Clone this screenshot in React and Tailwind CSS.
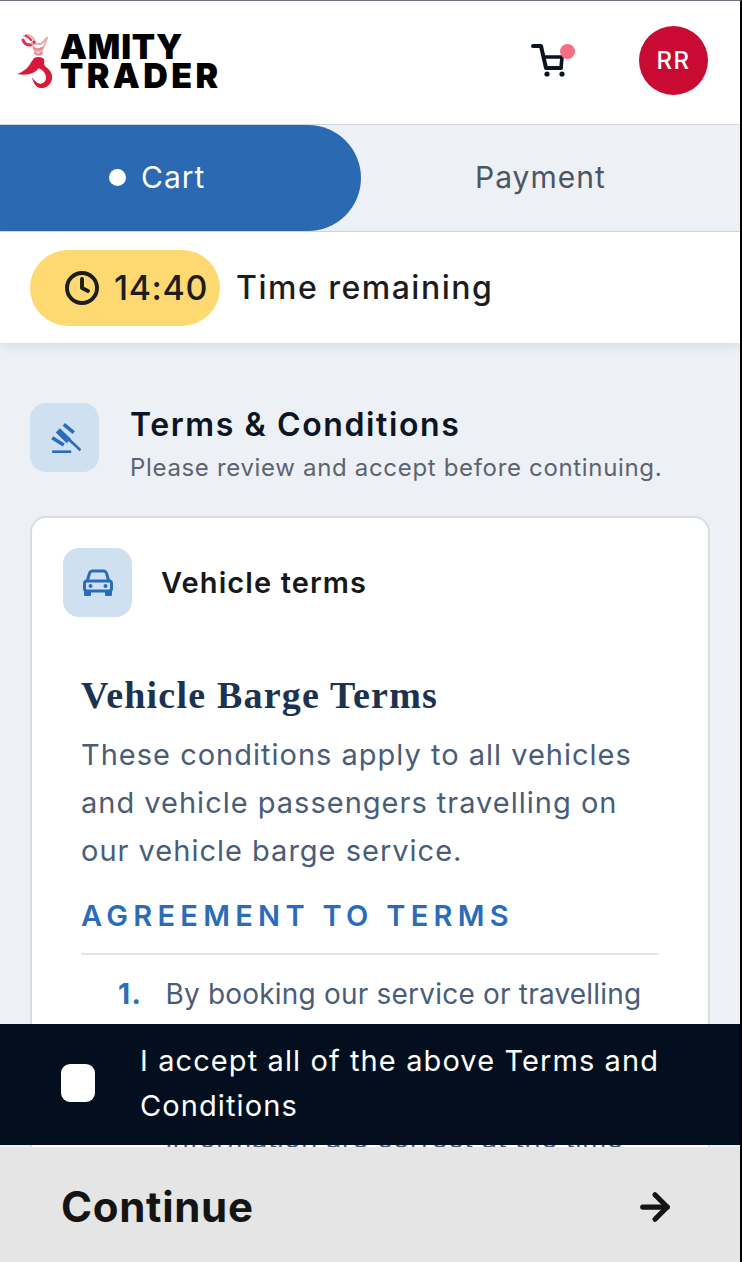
import { ArrowRight, Clock } from "lucide-react";

const sans = "font-['Inter','Noto_Sans',sans-serif]";

function Mermaid() {
  return (
    <svg width="36" height="56" viewBox="0 0 36 56" fill="none">
      <g strokeLinecap="round" strokeLinejoin="round">
        <path d="M7 3c3-2 7-1 9 2l3 6 5 0 6-6" stroke="#f2a9b0" strokeWidth="2" />
        <path d="M6 7c1 3 4 5 7 5 2 0 3-1 4-3" stroke="#e0324f" strokeWidth="3" />
        <path d="M9 3c2 1 4 2 5 4" stroke="#e0324f" strokeWidth="2.4" />
        <path d="M15 10l3 8 6 1 3-6 3-8" stroke="#f2a9b0" strokeWidth="2" />
        <path d="M17 15c2 2 5 2 8 0M18 20c2 2 5 2 7 0" stroke="#ea8592" strokeWidth="2.4" />
      </g>
      <path d="M17 25C21 23 25 24 27 26C28 30 26 32 29 34C33 37 36 41 35 46C34 52 28 56 23 55C19 54 16 50 15 44C18 49 22 52 26 50C30 48 30 42 26 38C24 36 22 35 21 36C18 40 10 43 0 41C6 39 11 35 13 31C14 29 16 27 17 25Z" fill="#d8193a" />
    </svg>
  );
}

function CartIcon() {
  return (
    <svg width="36" height="36" viewBox="0 0 36 36" fill="none">
      <path d="M3 3h8l5 22h15" stroke="#0b1320" strokeWidth="4" strokeLinecap="round" strokeLinejoin="round" />
      <path d="M13 14h19l-1 11" stroke="#0b1320" strokeWidth="3.6" strokeLinejoin="round" />
      <circle cx="17" cy="31" r="2.6" fill="#0b1320" />
      <circle cx="32" cy="31" r="2.6" fill="#0b1320" />
    </svg>
  );
}

function GavelIcon() {
  return (
    <svg width="32" height="32" viewBox="-1.5 0 32 32" fill="none" stroke="#2b6cb8">
      <path d="M13.3 2.3L23.3 10.7" strokeWidth="3.6" />
      <path d="M7.3 8.3L18.3 19" strokeWidth="6" />
      <path d="M1.7 15.7L13.3 23" strokeWidth="3.6" />
      <path d="M18.3 17.3L30 28.3" strokeWidth="2.6" />
      <path d="M1.7 29.7H20.7" strokeWidth="2.6" />
    </svg>
  );
}

function CarIcon() {
  return (
    <svg width="32" height="28" viewBox="0 0 32 28" fill="none">
      <path d="M5 13l2.4-8.5C8 2.8 9 2 10.6 2h10.8c1.6 0 2.6.8 3.2 2.5L27 13" stroke="#2b6cb8" strokeWidth="3" />
      <rect x="2.5" y="12" width="27" height="10" rx="2.5" stroke="#2b6cb8" strokeWidth="3" />
      <circle cx="8.5" cy="17" r="2" fill="#2b6cb8" />
      <circle cx="23.5" cy="17" r="2" fill="#2b6cb8" />
      <path d="M2 22h7v4a1 1 0 0 1-1 1H3a1 1 0 0 1-1-1zM23 22h7v4a1 1 0 0 1-1 1h-5a1 1 0 0 1-1-1z" fill="#2b6cb8" />
    </svg>
  );
}

export default function App() {
  return (
    <div className={`${sans} relative flex h-[1262px] w-[742px] flex-col overflow-hidden border-t border-r-2 border-t-gray-500 border-r-black bg-[#edf0f5]`}>
      {/* header */}
      <header className="flex h-[123px] shrink-0 items-center justify-between bg-white pr-[32px] pb-[4px] pl-[17px]">
        <div className="flex items-center gap-[7px]">
          <Mermaid />
          <div className="text-[34px] leading-[29px] font-black text-black">
            <div className="tracking-[0.8px]">AMITY</div>
            <div className="tracking-[3.4px]">TRADER</div>
          </div>
        </div>
        <div className="flex items-center gap-[73px]">
          <div className="relative">
            <CartIcon />
            <span className="absolute top-[1px] right-[-9px] h-[15px] w-[15px] rounded-full bg-[#f76d80]" />
          </div>
          <div className="flex h-[69px] w-[69px] items-center justify-center rounded-full bg-[#c90a32] text-[24px] font-medium tracking-[1.5px] text-white">RR</div>
        </div>
      </header>

      {/* steps */}
      <nav className="flex h-[108px] shrink-0 border-y border-[#d3d7de] text-[30px] tracking-[1px]">
        <div className="flex w-[361px] items-center gap-[15px] rounded-r-[54px] bg-[#2b69b3] pb-[2px] pl-[109px] text-white">
          <span className="h-[17px] w-[17px] rounded-full bg-white" />
          Cart
        </div>
        <div className="flex flex-1 items-center pb-[2px] pl-[114px] text-[#4b5563]">Payment</div>
      </nav>

      {/* timer */}
      <div className="flex h-[111px] shrink-0 items-center gap-[16px] bg-white pl-[30px] shadow-[0_4px_10px_rgba(0,0,0,0.08)]">
        <div className="flex h-[76px] w-[190px] items-center gap-[14px] rounded-full bg-[#fed870] pl-[34px] text-[#1d1d1f]">
          <Clock size={36} strokeWidth={2.6} />
          <span className="text-[34px] font-medium tracking-[0.6px]">14:40</span>
        </div>
        <span className="text-[32px] font-medium tracking-[1.5px] text-[#1d1d1f]">Time remaining</span>
      </div>

      {/* scrolling content */}
      <main className="min-h-0 flex-1 overflow-hidden px-[30px] pt-[60px]">
        <div className="flex items-start gap-[31px]">
          <div className="flex h-[69px] w-[69px] shrink-0 items-center justify-center rounded-[16px] bg-[#cfe0f0]">
            <GavelIcon />
          </div>
          <div>
            <h1 className="text-[32px] leading-[44px] font-semibold tracking-[1.6px] text-[#0b1524]">Terms &amp; Conditions</h1>
            <p className="mt-[1px] text-[24px] leading-[40px] tracking-[0.67px] text-[#5c6470]">Please review and accept before continuing.</p>
          </div>
        </div>

        <section className="mt-[28px] rounded-t-[16px] border-2 border-[#d9dce1] bg-white pt-[30px]">
          <div className="flex items-center gap-[29px] pl-[31px]">
            <div className="flex h-[69px] w-[69px] shrink-0 items-center justify-center rounded-[16px] bg-[#cfe0f0]">
              <CarIcon />
            </div>
            <h2 className="text-[29px] font-semibold tracking-[1.1px] text-[#17181a]">Vehicle terms</h2>
          </div>

          <div className="mt-[56px] px-[49px]">
            <h3 className="font-['Liberation_Serif',serif] text-[38px] leading-[44px] font-bold tracking-[1.2px] text-[#1b3350]">Vehicle Barge Terms</h3>
            <p className="mt-[14px] text-[29px] leading-[48px] tracking-[1px] text-[#4a5d78]">
              These conditions apply to all vehicles and vehicle passengers travelling on our vehicle barge service.
            </p>
            <h4 className="mt-[19px] border-b-2 border-[#e2e5ea] pb-[15px] text-[29px] leading-[44px] font-semibold tracking-[5.3px] text-[#2b6cb8]">AGREEMENT TO TERMS</h4>
            <ol className="mt-[15px] text-[28px] leading-[48px] tracking-[0.2px] text-[#4a5d78]">
              <li className="flex gap-[23px] pl-[37px]">
                <span className="font-bold tracking-[1.5px] text-[#2b6cb8]">1.</span>
                <span>By booking our service or travelling with us, you agree to these terms and confirm that your details and information are correct at the time</span>
              </li>
            </ol>
          </div>
        </section>
      </main>

      {/* accept + continue */}
      <div className="absolute inset-x-0 bottom-0">
        <label className="flex h-[121px] items-center gap-[45px] bg-[#030f1e] pr-[60px] pb-[3px] pl-[61px] text-[29px] leading-[45px] tracking-[1.1px] text-white">
          <span className="h-[38px] w-[34px] shrink-0 rounded-[9px] bg-white" />
          <span>I accept all of the above Terms and Conditions</span>
        </label>
        <button className="mt-[2px] flex h-[115px] w-full items-center justify-between bg-[#e5e5e5] pt-[4px] pr-[64px] pl-[61px] text-[42px] font-bold tracking-[0.7px] text-[#141414]">
          Continue
          <ArrowRight size={42} strokeWidth={3} />
        </button>
      </div>
    </div>
  );
}
